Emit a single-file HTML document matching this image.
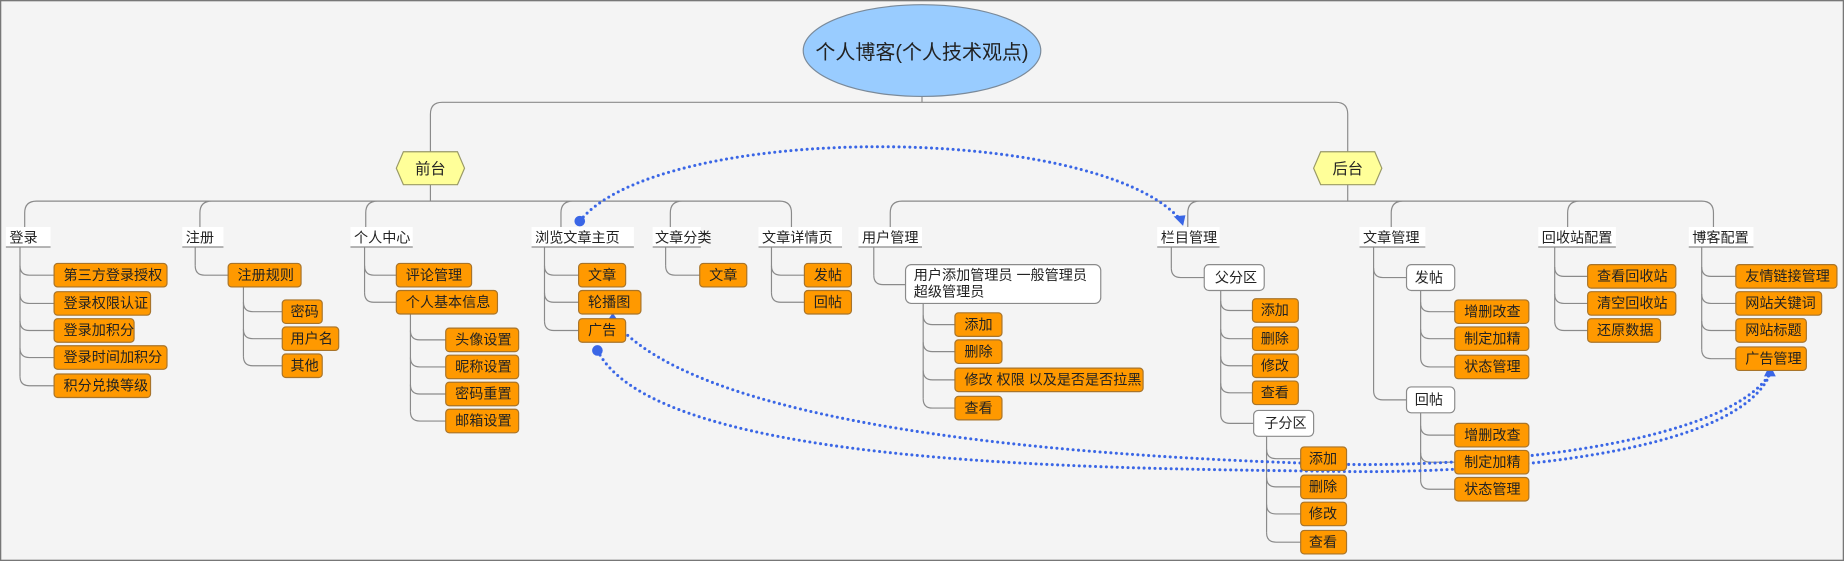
<!DOCTYPE html>
<html><head><meta charset="utf-8">
<style>
html,body{margin:0;padding:0;background:#f4f4f4;}
svg{display:block;}
text{font-family:"Liberation Sans","Noto Sans CJK SC","WenQuanYi Zen Hei",sans-serif;font-size:12px;fill:#222;}
.c{fill:none;stroke:#8a8a8a;stroke-width:1;}
.o{fill:#ff9900;stroke:#a8742a;stroke-width:1;}
.w{fill:#fff;stroke:#8a8a8a;stroke-width:1;}
.lb{fill:#fff;}
.ul{stroke:#8a8a8a;stroke-width:1;}
.d{fill:none;stroke:#3a66e6;stroke-width:2.6;stroke-linecap:round;stroke-dasharray:0 4.6;}
</style></head>
<body>
<svg width="1844" height="561" viewBox="0 0 1568 477" xmlns="http://www.w3.org/2000/svg">
<rect x="0.5" y="0.5" width="1567" height="476" fill="#f4f4f4" stroke="#777" stroke-width="1.2"/>

<path class="c" d="M784,82 V87 M366,129 V97 Q366,87 376,87 H1136 Q1146,87 1146,97 V129"/>
<path class="c" d="M366,157 V171 M1146,157 V171"/>
<path class="c" d="M21,193 V181 Q21,171 31,171 H663 Q673,171 673,181 V193
M170,193 V181 Q170,171 180,171 M311,193 V181 Q311,171 321,171 M477,193 V181 Q477,171 487,171 M570,193 V181 Q570,171 580,171"/>
<path class="c" d="M757,193 V181 Q757,171 767,171 H1447 Q1457,171 1457,181 V193
M1010,193 V181 Q1010,171 1020,171 M1183,193 V181 Q1183,171 1193,171 M1333,193 V181 Q1333,171 1343,171"/>

<!-- child connectors: vertical trunks -->
<path class="c" d="
M17,210 V320 M166,210 V226 M207,244 V303 M310,210 V249 M349,267 V350
M463,210 V273 M566,210 V226 M656,210 V249 M743,210 V234 M785,258 V339
M996,210 V228 M1038,247 V352 M1077,371 V453 M1168,210 V332 M1208,247 V304 M1208,351 V408
M1322,210 V273 M1447,210 V297"/>
<!-- child connectors: curves -->
<path class="c" d="
M17,226 Q17,234 25,234 H46 M17,250 Q17,258 25,258 H46 M17,273 Q17,281 25,281 H46 M17,296 Q17,304 25,304 H46 M17,320 Q17,328 25,328 H46
M166,226 Q166,234 174,234 H194
M207,257 Q207,265 215,265 H240 M207,280 Q207,288 215,288 H240 M207,303 Q207,311 215,311 H240
M310,226 Q310,234 318,234 H337 M310,249 Q310,257 318,257 H337
M349,281 Q349,289 357,289 H379 M349,304 Q349,312 357,312 H379 M349,327 Q349,335 357,335 H379 M349,350 Q349,358 357,358 H379
M463,226 Q463,234 471,234 H492 M463,249 Q463,257 471,257 H492 M463,273 Q463,281 471,281 H492
M566,226 Q566,234 574,234 H595
M656,226 Q656,234 664,234 H684 M656,249 Q656,257 664,257 H684
M743,234 Q743,242 751,242 H770
M785,268 Q785,276 793,276 H812 M785,291 Q785,299 793,299 H812 M785,315 Q785,323 793,323 H812 M785,339 Q785,347 793,347 H812
M996,228 Q996,236 1004,236 H1024
M1038,256 Q1038,264 1046,264 H1065 M1038,280 Q1038,288 1046,288 H1065 M1038,303 Q1038,311 1046,311 H1065 M1038,326 Q1038,334 1046,334 H1065 M1038,352 Q1038,360 1046,360 H1066
M1077,382 Q1077,390 1085,390 H1106 M1077,406 Q1077,414 1085,414 H1106 M1077,429 Q1077,437 1085,437 H1106 M1077,453 Q1077,461 1085,461 H1106
M1168,228 Q1168,236 1176,236 H1196 M1168,332 Q1168,340 1176,340 H1196
M1208,257 Q1208,265 1216,265 H1237 M1208,280 Q1208,288 1216,288 H1237 M1208,304 Q1208,312 1216,312 H1237
M1208,362 Q1208,370 1216,370 H1237 M1208,385 Q1208,393 1216,393 H1237 M1208,408 Q1208,416 1216,416 H1237
M1322,227 Q1322,235 1330,235 H1350 M1322,250 Q1322,258 1330,258 H1350 M1322,273 Q1322,281 1330,281 H1350
M1447,227 Q1447,235 1455,235 H1476 M1447,250 Q1447,258 1455,258 H1476 M1447,273 Q1447,281 1455,281 H1476 M1447,297 Q1447,305 1455,305 H1476
"/>

<ellipse cx="784" cy="43" rx="101" ry="39" fill="#99ccff" stroke="#7a8a9a"/>
<text x="784" y="50" text-anchor="middle" style="font-size:17px">个人博客(个人技术观点)</text>

<polygon points="343,129 389,129 395,143 389,157 343,157 337,143" fill="#ffff99" stroke="#999966"/>
<text x="366" y="148" text-anchor="middle" style="font-size:13px">前台</text>
<polygon points="1123,129 1169,129 1175,143 1169,157 1123,157 1117,143" fill="#ffff99" stroke="#999966"/>
<text x="1146" y="148" text-anchor="middle" style="font-size:13px">后台</text>

<g>
<rect class="lb" x="5" y="193" width="38" height="17"/><line class="ul" x1="5" y1="210" x2="43" y2="210"/><text x="8" y="206">登录</text>
<rect class="lb" x="155" y="193" width="35" height="17"/><line class="ul" x1="155" y1="210" x2="190" y2="210"/><text x="158" y="206">注册</text>
<rect class="lb" x="298" y="193" width="53" height="17"/><line class="ul" x1="298" y1="210" x2="351" y2="210"/><text x="301" y="206">个人中心</text>
<rect class="lb" x="452" y="193" width="87" height="17"/><line class="ul" x1="452" y1="210" x2="539" y2="210"/><text x="455" y="206">浏览文章主页</text>
<rect class="lb" x="555" y="193" width="41" height="17"/><line class="ul" x1="555" y1="210" x2="596" y2="210"/><text x="557" y="206">文章分类</text>
<rect class="lb" x="645" y="193" width="71" height="17"/><line class="ul" x1="645" y1="210" x2="716" y2="210"/><text x="648" y="206">文章详情页</text>
<rect class="lb" x="730" y="193" width="54" height="17"/><line class="ul" x1="730" y1="210" x2="784" y2="210"/><text x="733" y="206">用户管理</text>
<rect class="lb" x="984" y="193" width="53" height="17"/><line class="ul" x1="984" y1="210" x2="1037" y2="210"/><text x="987" y="206">栏目管理</text>
<rect class="lb" x="1156" y="193" width="56" height="17"/><line class="ul" x1="1156" y1="210" x2="1212" y2="210"/><text x="1159" y="206">文章管理</text>
<rect class="lb" x="1308" y="193" width="66" height="17"/><line class="ul" x1="1308" y1="210" x2="1374" y2="210"/><text x="1311" y="206">回收站配置</text>
<rect class="lb" x="1436" y="193" width="55" height="17"/><line class="ul" x1="1436" y1="210" x2="1491" y2="210"/><text x="1439" y="206">博客配置</text>
</g>

<path class="d" d="M493,188 C560,104 930,104 1003,186"/>
<path d="M998,184 L1006,192 L1008,183 Z" fill="#3a66e6"/>
<circle cx="493" cy="188" r="4.5" fill="#3a66e6"/>
<path class="d" d="M508,298 C560,400 950,398 1150,401 C1300,402 1480,380 1505,318"/>
<path class="d" d="M521,272 C600,370 950,390 1150,395 C1300,396 1470,372 1505,318"/>
<circle cx="508" cy="298" r="4.5" fill="#3a66e6"/>
<path d="M1500,320 L1505,310 L1510,320 Z" fill="#3a66e6"/>
<path d="M517,272 L521,266 L525,272 Z" fill="#3a66e6"/>

<g>
<rect class="o" x="46" y="224" width="96" height="20" rx="3"/><text x="54" y="238">第三方登录授权</text>
<rect class="o" x="46" y="248" width="82" height="20" rx="3"/><text x="54" y="262">登录权限认证</text>
<rect class="o" x="46" y="271" width="68" height="20" rx="3"/><text x="54" y="285">登录加积分</text>
<rect class="o" x="46" y="294" width="96" height="20" rx="3"/><text x="54" y="308">登录时间加积分</text>
<rect class="o" x="46" y="318" width="82" height="20" rx="3"/><text x="54" y="332">积分兑换等级</text>

<rect class="o" x="194" y="224" width="62" height="20" rx="3"/><text x="202" y="238">注册规则</text>
<rect class="o" x="240" y="255" width="34" height="20" rx="3"/><text x="247" y="269">密码</text>
<rect class="o" x="240" y="278" width="48" height="20" rx="3"/><text x="247" y="292">用户名</text>
<rect class="o" x="240" y="301" width="34" height="20" rx="3"/><text x="247" y="315">其他</text>

<rect class="o" x="337" y="224" width="64" height="20" rx="3"/><text x="345" y="238">评论管理</text>
<rect class="o" x="337" y="247" width="86" height="20" rx="3"/><text x="345" y="261">个人基本信息</text>
<rect class="o" x="379" y="279" width="62" height="20" rx="3"/><text x="387" y="293">头像设置</text>
<rect class="o" x="379" y="302" width="62" height="20" rx="3"/><text x="387" y="316">昵称设置</text>
<rect class="o" x="379" y="325" width="62" height="20" rx="3"/><text x="387" y="339">密码重置</text>
<rect class="o" x="379" y="348" width="62" height="20" rx="3"/><text x="387" y="362">邮箱设置</text>

<rect class="o" x="492" y="224" width="40" height="20" rx="3"/><text x="500" y="238">文章</text>
<rect class="o" x="492" y="247" width="53" height="20" rx="3"/><text x="500" y="261">轮播图</text>
<rect class="o" x="492" y="271" width="40" height="20" rx="3"/><text x="500" y="285">广告</text>

<rect class="o" x="595" y="224" width="40" height="20" rx="3"/><text x="603" y="238">文章</text>
<rect class="o" x="684" y="224" width="40" height="20" rx="3"/><text x="692" y="238">发帖</text>
<rect class="o" x="684" y="247" width="40" height="20" rx="3"/><text x="692" y="261">回帖</text>

<rect class="w" x="770" y="225" width="166" height="33" rx="5"/><text x="777" y="238">用户添加管理员 一般管理员</text><text x="777" y="252">超级管理员</text>
<rect class="o" x="812" y="266" width="40" height="20" rx="3"/><text x="820" y="280">添加</text>
<rect class="o" x="812" y="289" width="40" height="20" rx="3"/><text x="820" y="303">删除</text>
<rect class="o" x="812" y="313" width="160" height="20" rx="3"/><text x="820" y="327">修改 权限 以及是否是否拉黑</text>
<rect class="o" x="812" y="337" width="40" height="20" rx="3"/><text x="820" y="351">查看</text>

<rect class="w" x="1024" y="225" width="51" height="22" rx="4"/><text x="1033" y="240">父分区</text>
<rect class="o" x="1065" y="254" width="39" height="20" rx="3"/><text x="1072" y="268">添加</text>
<rect class="o" x="1065" y="278" width="39" height="20" rx="3"/><text x="1072" y="292">删除</text>
<rect class="o" x="1065" y="301" width="39" height="20" rx="3"/><text x="1072" y="315">修改</text>
<rect class="o" x="1065" y="324" width="39" height="20" rx="3"/><text x="1072" y="338">查看</text>
<rect class="w" x="1066" y="349" width="51" height="22" rx="4"/><text x="1075" y="364">子分区</text>
<rect class="o" x="1106" y="380" width="39" height="20" rx="3"/><text x="1113" y="394">添加</text>
<rect class="o" x="1106" y="404" width="39" height="20" rx="3"/><text x="1113" y="418">删除</text>
<rect class="o" x="1106" y="427" width="39" height="20" rx="3"/><text x="1113" y="441">修改</text>
<rect class="o" x="1106" y="451" width="39" height="20" rx="3"/><text x="1113" y="465">查看</text>

<rect class="w" x="1196" y="225" width="41" height="22" rx="4"/><text x="1203" y="240">发帖</text>
<rect class="o" x="1237" y="255" width="63" height="20" rx="3"/><text x="1245" y="269">增删改查</text>
<rect class="o" x="1237" y="278" width="63" height="20" rx="3"/><text x="1245" y="292">制定加精</text>
<rect class="o" x="1237" y="302" width="63" height="20" rx="3"/><text x="1245" y="316">状态管理</text>
<rect class="w" x="1196" y="329" width="41" height="22" rx="4"/><text x="1203" y="344">回帖</text>
<rect class="o" x="1237" y="360" width="63" height="20" rx="3"/><text x="1245" y="374">增删改查</text>
<rect class="o" x="1237" y="383" width="63" height="20" rx="3"/><text x="1245" y="397">制定加精</text>
<rect class="o" x="1237" y="406" width="63" height="20" rx="3"/><text x="1245" y="420">状态管理</text>

<rect class="o" x="1350" y="225" width="75" height="20" rx="3"/><text x="1358" y="239">查看回收站</text>
<rect class="o" x="1350" y="248" width="75" height="20" rx="3"/><text x="1358" y="262">清空回收站</text>
<rect class="o" x="1350" y="271" width="62" height="20" rx="3"/><text x="1358" y="285">还原数据</text>

<rect class="o" x="1476" y="225" width="86" height="20" rx="3"/><text x="1484" y="239">友情链接管理</text>
<rect class="o" x="1476" y="248" width="73" height="20" rx="3"/><text x="1484" y="262">网站关键词</text>
<rect class="o" x="1476" y="271" width="60" height="20" rx="3"/><text x="1484" y="285">网站标题</text>
<rect class="o" x="1476" y="295" width="60" height="20" rx="3"/><text x="1484" y="309">广告管理</text>
</g>
</svg>
</body></html>
